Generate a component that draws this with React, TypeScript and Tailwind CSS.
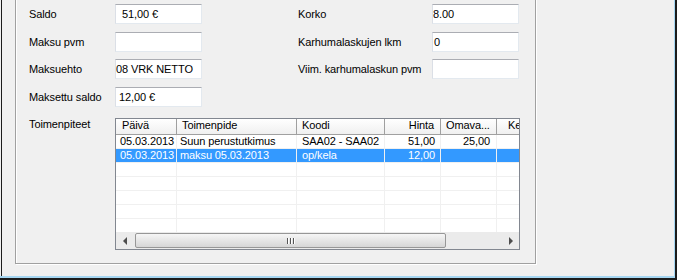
import React from "react";

type Col = { name: string; w: string; head: string; cell: string };

const cols: Col[] = [
  { name: "Päivä", w: "w-[61px]", head: "justify-start pl-[6px]", cell: "justify-start pl-[4px]" },
  { name: "Toimenpide", w: "w-[120px]", head: "justify-start pl-[5px]", cell: "justify-start pl-[3px]" },
  { name: "Koodi", w: "w-[88px]", head: "justify-start pl-[5px]", cell: "justify-start pl-[5px]" },
  { name: "Hinta", w: "w-[56px]", head: "justify-end pr-[6px]", cell: "justify-end pr-[5px]" },
  { name: "Omava...", w: "w-[56px]", head: "justify-start pl-[5px]", cell: "justify-end pr-[6px]" },
  { name: "Kela", w: "w-[60px]", head: "justify-start pl-[11px]", cell: "justify-start pl-[4px]" },
];

const rows = [
  { sel: false, v: ["05.03.2013", "Suun perustutkimus", "SAA02 - SAA02", "51,00", "25,00", ""] },
  { sel: true, v: ["05.03.2013", "maksu 05.03.2013", "op/kela", "12,00", "", ""] },
  { sel: false, v: ["", "", "", "", "", ""] },
  { sel: false, v: ["", "", "", "", "", ""] },
  { sel: false, v: ["", "", "", "", "", ""] },
  { sel: false, v: ["", "", "", "", "", ""] },
  { sel: false, v: ["", "", "", "", "", ""] },
];

function TextBox({ value = "", pad = "pl-[1px]" }: { value?: string; pad?: string }) {
  return (
    <div
      className={`w-[87px] h-[20px] shrink-0 flex items-center bg-white whitespace-pre border-t border-t-[#abadb3] border-l border-l-[#dbdfe6] border-r border-r-[#e3e9ef] border-b border-b-[#e3e9ef] ${pad}`}
    >
      {value}
    </div>
  );
}

function Label({ text, w }: { text: string; w: string }) {
  return <div className={`${w} shrink-0 whitespace-nowrap`}>{text}</div>;
}

function ListView() {
  return (
    <div className="w-[405px] h-[132px] shrink-0 flex flex-col border border-[#828790] bg-white overflow-hidden">
      {/* header */}
      <div className="h-[16px] shrink-0 flex border-b border-[#a0a0a0] bg-linear-to-b from-white to-[#f0f0f0]">
        {cols.map((c) => (
          <div
            key={c.name}
            className={`${c.w} shrink-0 flex items-center pb-[2px] border-r border-[#a0a0a0] whitespace-nowrap overflow-hidden ${c.head}`}
          >
            {c.name}
          </div>
        ))}
      </div>

      {/* rows */}
      <div className="h-[97px] shrink-0 overflow-hidden">
        {rows.map((r, i) => (
          <div
            key={i}
            className={`h-[14px] flex border-b border-[#f0f0f0] ${r.sel ? "bg-[#3399ff] text-white" : ""}`}
          >
            {cols.map((c, j) => (
              <div
                key={c.name}
                className={`${c.w} shrink-0 flex items-center border-r border-[#f0f0f0] whitespace-nowrap overflow-hidden ${c.cell}`}
              >
                {r.v[j]}
              </div>
            ))}
          </div>
        ))}
      </div>

      {/* horizontal scrollbar */}
      <div className="h-[17px] shrink-0 flex bg-[#ebebeb]">
        <div className="w-[17px] shrink-0 flex items-center justify-center">
          <div className="w-0 h-0 border-y-[4px] border-y-transparent border-r-[4px] border-r-[#4d4d4d]" />
        </div>
        <div className="flex-1 flex">
          <div className="ml-[2px] mt-[1px] w-[311px] h-[15px] flex items-center justify-center gap-[2px] rounded-[2px] border border-[#979797] bg-linear-to-b from-[#f6f6f6] to-[#d6d6d6]">
            <div className="w-[1px] h-[6px] bg-[#555] shadow-[1px_0_0_#fff]" />
            <div className="w-[1px] h-[6px] bg-[#555] shadow-[1px_0_0_#fff]" />
            <div className="w-[1px] h-[6px] bg-[#555] shadow-[1px_0_0_#fff]" />
          </div>
        </div>
        <div className="w-[17px] shrink-0 flex items-center justify-center">
          <div className="w-0 h-0 border-y-[4px] border-y-transparent border-l-[4px] border-l-[#4d4d4d]" />
        </div>
      </div>
    </div>
  );
}

export default function App() {
  return (
    <div className="w-[677px] h-[280px] overflow-hidden bg-[#f0f0f0] [font-family:'Liberation_Sans',Arial,sans-serif] text-[11px] leading-[13px] tracking-[-0.1px] text-black">
      <div className="w-[677px] h-[280px] flex border-r-2 border-b-2 border-[#1c1c1c]">
        <div className="flex-1 flex border-r border-b-2 border-[#a7d7f2]">
          <div className="flex-1 ml-[1px] border-l border-[#1c1c1c] pl-[13px]">
            {/* group box */}
            <div className="-mt-[10px] w-[521px] h-[274px] border border-[#a0a0a0] shadow-[inset_1px_1px_0_#fff,1px_1px_0_#fff] pt-[13px] pl-[13px]">
              <div className="h-[20px] flex items-center">
                <Label text="Saldo" w="w-[86px]" />
                <TextBox value="51,00 €" pad="pl-[6px]" />
                <div className="w-[96px] shrink-0" />
                <Label text="Korko" w="w-[134px]" />
                <TextBox value="8.00" pad="pl-[0px]" />
              </div>
              <div className="mt-[8px] h-[20px] flex items-center">
                <Label text="Maksu pvm" w="w-[86px]" />
                <TextBox />
                <div className="w-[96px] shrink-0" />
                <Label text="Karhumalaskujen lkm" w="w-[134px]" />
                <TextBox value="0" pad="pl-[1px]" />
              </div>
              <div className="mt-[7px] h-[20px] flex items-center">
                <Label text="Maksuehto" w="w-[86px]" />
                <TextBox value="08 VRK NETTO" pad="pl-[0px]" />
                <div className="w-[96px] shrink-0" />
                <Label text="Viim. karhumalaskun pvm" w="w-[134px]" />
                <TextBox />
              </div>
              <div className="mt-[8px] h-[20px] flex items-center">
                <Label text="Maksettu saldo" w="w-[86px]" />
                <TextBox value="12,00 €" pad="pl-[3px]" />
              </div>
              <div className="mt-[11px] flex items-start">
                <Label text="Toimenpiteet" w="w-[86px]" />
                <ListView />
              </div>
            </div>
          </div>
        </div>
      </div>
    </div>
  );
}
